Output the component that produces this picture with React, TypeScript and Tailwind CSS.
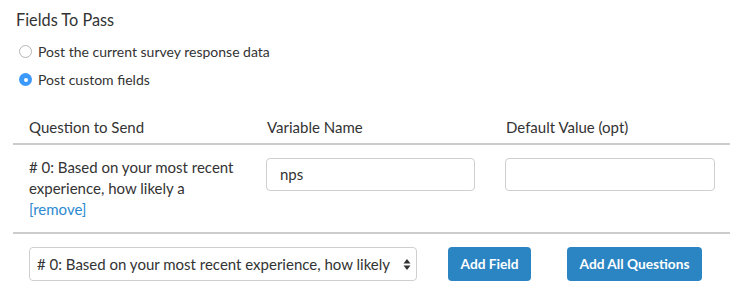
export default function App() {
  return (
    <main className="w-[743px] h-[299px] bg-white text-[#333] font-['Lato',sans-serif] overflow-hidden">
      <div className="pl-[16px] pt-[8px]">
        <h2 className="text-[16.3px] leading-[24px]">Fields To Pass</h2>
        <div className="mt-[11px] flex flex-col gap-[12px] pl-[3px] text-[14px]">
          <label className="flex items-center gap-[6px] h-[17px]">
            <span className="w-[13px] h-[13px] rounded-full border border-[#b5b5b5] bg-white" />
            <span>Post the current survey response data</span>
          </label>
          <label className="flex items-center gap-[6px] h-[17px] -mt-[1px]">
            <span className="w-[13px] h-[13px] rounded-full bg-[#3b99fc] flex items-center justify-center">
              <span className="w-[4px] h-[4px] rounded-full bg-white" />
            </span>
            <span>Post custom fields</span>
          </label>
        </div>
      </div>

      <div className="ml-[13px] w-[717px] mt-[23px] text-[15px]">
        <div className="grid grid-cols-[239px_239px_239px] pl-[16px] h-[34px] items-center border-b-2 border-[#cccccc]">
          <span>Question to Send</span>
          <span className="-ml-[1px]">Variable Name</span>
          <span className="-ml-[1px]">Default Value (opt)</span>
        </div>
        <div className="grid grid-cols-[239px_239px_239px] pl-[16px] pt-[13px] h-[89px] border-b-2 border-[#cccccc]">
          <div className="leading-[21px] pr-[4px] mt-[-1px]">
            <div># 0: Based on your most recent experience, how likely a</div>
            <a className="text-[#2b8ad0]">[remove]</a>
          </div>
          <div className="-ml-[2px]">
            <div className="w-[209px] h-[33px] rounded-[4px] border border-[#cfcfcf] px-[13px] flex items-center">nps</div>
          </div>
          <div className="-ml-[2px]">
            <div className="w-[210px] h-[33px] rounded-[4px] border border-[#cfcfcf]" />
          </div>
        </div>
        <div className="flex items-center pl-[16px] pt-[13px]">
          <div className="w-[388px] h-[34px] rounded-[4px] border border-[#cfcfcf] flex items-center justify-between pl-[7px] pr-[5px]">
            <span className="whitespace-nowrap"># 0: Based on your most recent experience, how likely</span>
            <svg width="8" height="13" viewBox="0 0 8 13">
              <path d="M4 1 L7.5 5.5 H0.5 Z" fill="#333" />
              <path d="M4 12 L7.5 7.5 H0.5 Z" fill="#333" />
            </svg>
          </div>
          <button className="ml-[31px] h-[34px] w-[83px] rounded-[4px] bg-[#2c85c3] text-white font-bold text-[13.7px]">Add Field</button>
          <button className="ml-[36px] h-[34px] w-[135px] rounded-[4px] bg-[#2c85c3] text-white font-bold text-[13.7px]">Add All Questions</button>
        </div>
      </div>
    </main>
  );
}
